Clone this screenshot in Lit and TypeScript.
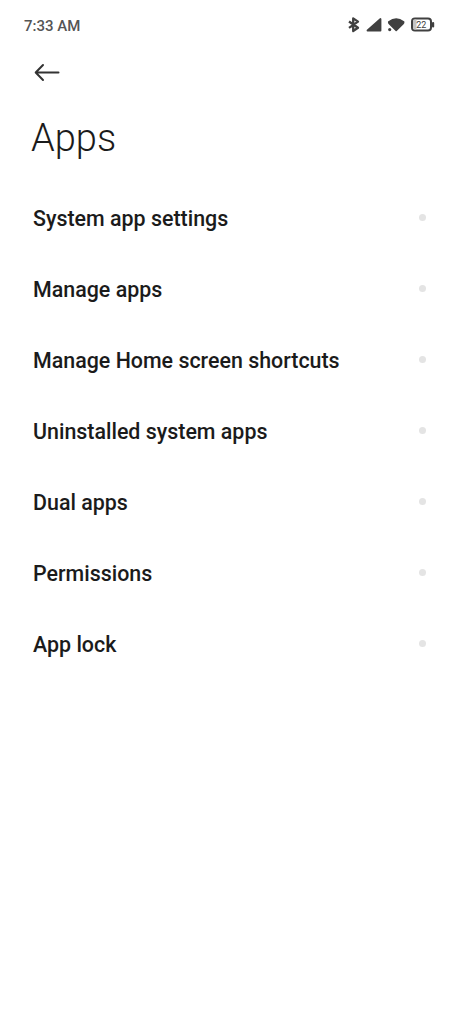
import { LitElement, html, css } from "lit";
import { customElement } from "lit/decorators.js";

@customElement("app-root")
class AppRoot extends LitElement {
  static styles = css`
    :host { display: block; height: 1024px; background: #fff; overflow: hidden; font-family: Roboto, sans-serif; color: #1b1b1b; }
    .status { display: flex; align-items: center; justify-content: space-between; height: 50px; padding: 0 26px 0 24px; box-sizing: border-box; }
    .time { font-size: 15px; line-height: 18px; padding-top: 1px; font-weight: 500; color: #555; }
    .icons { display: block; }
    .back { display: block; margin: 12px 0 0 34px; }
    h1 { margin: 31px 0 0 31px; font-weight: 300; font-size: 38px; line-height: 50px; height: 69px; }
    .row { display: flex; align-items: center; justify-content: space-between; height: 71px; padding: 0 35px 0 33px; font-size: 21.420px; font-weight: 500; }
    .row span:first-child { padding-top: 1px; }
    .dot { width: 7px; height: 7px; border-radius: 50%; background: #e4e4e4; }
  `;
  items = ["System app settings", "Manage apps", "Manage Home screen shortcuts", "Uninstalled system apps", "Dual apps", "Permissions", "App lock"];
  render() {
    return html`
      <div class="status">
        <span class="time">7:33 AM</span>
        <svg class="icons" width="88" height="18" viewBox="347 16 88 18" fill="#404040">
          <path d="M349 21.500l9 6.300-4.800 3.200v-12.600l4.800 3.200-9 6.300" fill="none" stroke="#404040" stroke-width="2.300" stroke-linejoin="round"/>
          <path d="M380.500 19v11.500h-13z" stroke="#404040" stroke-width="1.800" stroke-linejoin="round"/>
          <path d="M388.800 21.800q7.400-5.400 14.800 0 .3 1-.8 2.200l-6.600 6.500-6.600-6.500q-1.100-1.200-.8-2.200z" stroke="#404040" stroke-width="1.600" stroke-linejoin="round"/>
          <circle cx="389.700" cy="29.600" r="1.600"/>
          <rect x="412" y="18.500" width="19" height="12" rx="3" fill="#fff" stroke="#404040" stroke-width="2"/>
          <rect x="413" y="19.500" width="3.500" height="10" rx="1" fill="#c4c4c4"/>
          <rect x="432" y="22" width="2.200" height="5.500" rx="1"/>
          <text x="416.200" y="28" font-size="9">22</text>
        </svg>
      </div>
      <svg class="back" width="26" height="20" viewBox="34 62 26 20" fill="none" stroke="#333" stroke-width="2" stroke-linecap="round" stroke-linejoin="round"><path d="M58.500 72.500H36M43 65l-7.300 7.500 7.300 7.500"/></svg>
      <h1>Apps</h1>
      <nav>${this.items.map((t) => html`<div class="row"><span>${t}</span><span class="dot"></span></div>`)}</nav>
    `;
  }
}
